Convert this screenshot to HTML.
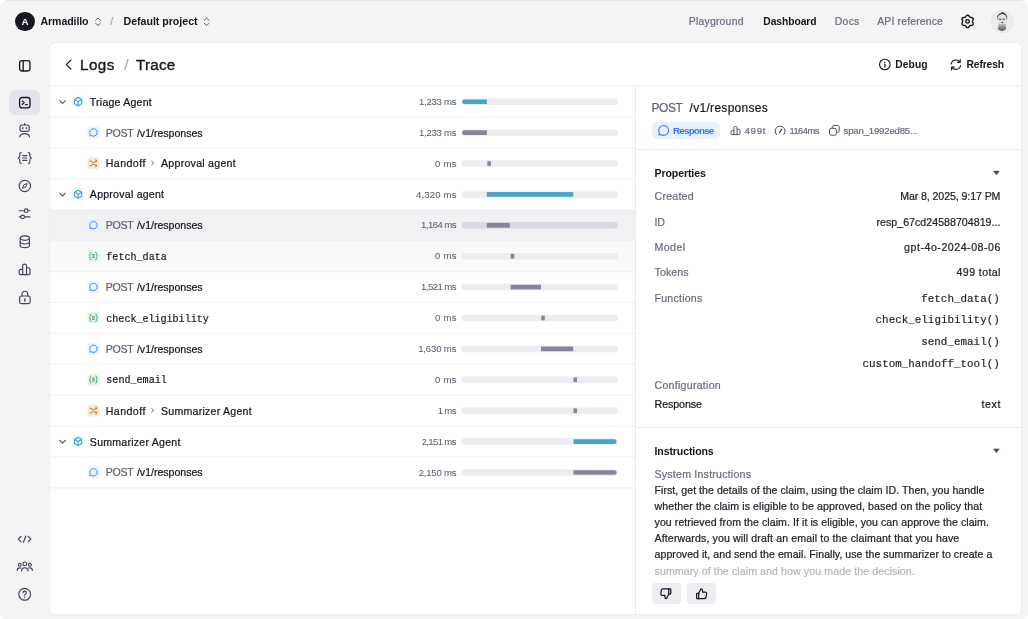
<!DOCTYPE html>
<html lang="en"><head><meta charset="utf-8"><title>Trace</title>
<style>
html,body{margin:0;padding:0;background:#fff;}
body{width:1028px;height:619px;overflow:hidden;position:relative;font-family:"Liberation Sans",sans-serif;}
#win{position:absolute;left:0;top:0;width:1028px;height:621px;background:#f4f4f4;border-radius:8px 8px 10px 10px;overflow:hidden;}
#topline{position:absolute;left:0;top:0;width:1028px;height:1px;background:#e6e6e6;}
.abs{position:absolute;display:block;}
.t{position:absolute;white-space:pre;display:block;}
#panel{position:absolute;left:49px;top:42px;width:971px;height:571px;background:#fff;border:1px solid #ebebf1;border-radius:6px;box-sizing:content-box;}
.sep{position:absolute;height:1px;background:#ededf2;}
.vsep{position:absolute;width:1px;background:#eaeaf0;}
.rowbg{position:absolute;left:50px;width:585px;}
.btn{position:absolute;background:#ececf1;border-radius:4px;}
#txt{position:absolute;left:0;top:0;width:1028px;height:619px;will-change:transform;}

</style></head><body>
<div id="win">
<div id="topline"></div>
<!-- org avatar -->
<div class="abs" style="left:15.3px;top:11.6px;width:19.8px;height:19.8px;border-radius:50%;background:#17171f;box-shadow:0 0 0 0.8px rgba(255,255,255,0.7)"></div>
<!-- up/down chevrons -->


<!-- gear -->

<!-- user avatar -->


<!-- sidebar -->
<div class="abs" style="left:9.3px;top:90.2px;width:30.7px;height:24.7px;border-radius:6px;background:#e3e3ea"></div>


<!-- robot -->

<!-- {=} -->

<!-- compass -->

<!-- sliders -->

<!-- db -->

<!-- chart -->

<!-- lock -->

<!-- code -->

<!-- people -->

<!-- help -->


<!-- main panel -->
<div id="panel"></div>
<!-- header chevron -->

<!-- info -->

<!-- refresh -->

<div class="vsep" style="left:635px;top:86px;height:528px"></div>

<!-- right panel -->
<div class="abs" style="left:651.8px;top:122.1px;width:68.2px;height:16.5px;border-radius:5px;background:#e8f2fe"></div>

<!-- bars -->

<!-- gauge -->

<!-- copy -->

<div class="sep" style="left:636px;top:149px;width:385px"></div>

<div class="sep" style="left:636px;top:427px;width:385px"></div>

<!-- thumbs -->
<div class="btn" style="left:651.6px;top:583.1px;width:29.2px;height:21px"></div>
<div class="btn" style="left:687px;top:583.1px;width:29px;height:21px"></div>










<div class="rowbg" style="top:209.62px;height:30.89px;background:#f1f1f4"></div>

<div class="rowbg" style="top:240.51px;height:30.89px;background:#fafafa"></div>










<div class="abs" style="left:50px;top:116px;width:585px;height:1px;background:rgba(240,240,245,0.36)"></div><div class="abs" style="left:50px;top:117px;width:585px;height:1px;background:rgba(240,240,245,0.64)"></div>
<div class="abs" style="left:50px;top:147px;width:585px;height:1px;background:rgba(240,240,245,0.47)"></div><div class="abs" style="left:50px;top:148px;width:585px;height:1px;background:rgba(240,240,245,0.53)"></div>
<div class="abs" style="left:50px;top:178px;width:585px;height:1px;background:rgba(240,240,245,0.57)"></div><div class="abs" style="left:50px;top:179px;width:585px;height:1px;background:rgba(240,240,245,0.43)"></div>
<div class="abs" style="left:50px;top:209px;width:585px;height:1px;background:rgba(240,240,245,0.68)"></div><div class="abs" style="left:50px;top:210px;width:585px;height:1px;background:rgba(240,240,245,0.32)"></div>
<div class="abs" style="left:50px;top:240px;width:585px;height:1px;background:rgba(240,240,245,0.78)"></div><div class="abs" style="left:50px;top:241px;width:585px;height:1px;background:rgba(240,240,245,0.22)"></div>
<div class="abs" style="left:50px;top:271px;width:585px;height:1px;background:rgba(240,240,245,0.89)"></div><div class="abs" style="left:50px;top:272px;width:585px;height:1px;background:rgba(240,240,245,0.11)"></div>
<div class="abs" style="left:50px;top:302px;width:585px;height:1px;background:rgba(240,240,245,1.00)"></div>
<div class="abs" style="left:50px;top:332px;width:585px;height:1px;background:rgba(240,240,245,0.10)"></div><div class="abs" style="left:50px;top:333px;width:585px;height:1px;background:rgba(240,240,245,0.90)"></div>
<div class="abs" style="left:50px;top:363px;width:585px;height:1px;background:rgba(240,240,245,0.21)"></div><div class="abs" style="left:50px;top:364px;width:585px;height:1px;background:rgba(240,240,245,0.79)"></div>
<div class="abs" style="left:50px;top:394px;width:585px;height:1px;background:rgba(240,240,245,0.31)"></div><div class="abs" style="left:50px;top:395px;width:585px;height:1px;background:rgba(240,240,245,0.69)"></div>
<div class="abs" style="left:50px;top:425px;width:585px;height:1px;background:rgba(240,240,245,0.42)"></div><div class="abs" style="left:50px;top:426px;width:585px;height:1px;background:rgba(240,240,245,0.58)"></div>
<div class="abs" style="left:50px;top:456px;width:585px;height:1px;background:rgba(240,240,245,0.52)"></div><div class="abs" style="left:50px;top:457px;width:585px;height:1px;background:rgba(240,240,245,0.48)"></div>
<div class="abs" style="left:50px;top:487px;width:585px;height:1px;background:rgba(240,240,245,0.62)"></div><div class="abs" style="left:50px;top:488px;width:585px;height:1px;background:rgba(240,240,245,0.38)"></div>
<div class="abs" style="left:50px;top:85px;width:971px;height:1px;background:rgba(240,240,245,0.46)"></div><div class="abs" style="left:50px;top:86px;width:971px;height:1px;background:rgba(240,240,245,0.54)"></div>

<svg class="abs" style="left:0;top:0" width="1028" height="619" viewBox="0 0 1028 619">
<g transform="translate(94 16.8)"><path d="M1.6 3.5 L4 1.3 L6.4 3.5 M1.6 6.5 L4 8.7 L6.4 6.5" fill="none" stroke="#55556a" stroke-width="0.95" stroke-linecap="round" stroke-linejoin="round"/></g>
<g transform="translate(202.6 16.8)"><path d="M1.6 3.5 L4 1.3 L6.4 3.5 M1.6 6.5 L4 8.7 L6.4 6.5" fill="none" stroke="#55556a" stroke-width="0.95" stroke-linecap="round" stroke-linejoin="round"/></g>
<g transform="translate(960.1 13.9)"><g fill="none" stroke="#121218" stroke-width="1.4" stroke-linejoin="round"><path d="M12.37 7.50 L12.41 7.18 L12.53 6.84 L12.69 6.47 L12.86 6.06 L13.00 5.63 L13.07 5.19 L13.04 4.77 L12.90 4.39 L12.64 4.07 L12.28 3.83 L11.87 3.67 L11.42 3.58 L10.99 3.52 L10.59 3.48 L10.23 3.41 L9.94 3.28 L9.68 3.09 L9.44 2.82 L9.20 2.49 L8.94 2.14 L8.63 1.80 L8.29 1.52 L7.90 1.33 L7.50 1.27 L7.10 1.33 L6.71 1.52 L6.37 1.80 L6.06 2.14 L5.80 2.49 L5.56 2.82 L5.32 3.09 L5.07 3.28 L4.77 3.41 L4.41 3.48 L4.01 3.52 L3.58 3.58 L3.13 3.67 L2.72 3.83 L2.36 4.07 L2.10 4.39 L1.96 4.77 L1.93 5.19 L2.00 5.63 L2.14 6.06 L2.31 6.47 L2.47 6.84 L2.59 7.18 L2.63 7.50 L2.59 7.82 L2.47 8.16 L2.31 8.53 L2.14 8.94 L2.00 9.37 L1.93 9.81 L1.96 10.23 L2.10 10.61 L2.36 10.93 L2.72 11.17 L3.13 11.33 L3.58 11.42 L4.01 11.48 L4.41 11.52 L4.77 11.59 L5.06 11.72 L5.32 11.91 L5.56 12.18 L5.80 12.51 L6.06 12.86 L6.37 13.20 L6.71 13.48 L7.10 13.67 L7.50 13.73 L7.90 13.67 L8.29 13.48 L8.63 13.20 L8.94 12.86 L9.20 12.51 L9.44 12.18 L9.68 11.91 L9.94 11.72 L10.23 11.59 L10.59 11.52 L10.99 11.48 L11.42 11.42 L11.87 11.33 L12.28 11.17 L12.64 10.93 L12.90 10.62 L13.04 10.23 L13.07 9.81 L13.00 9.37 L12.86 8.94 L12.69 8.53 L12.53 8.16 L12.41 7.82 Z"/><circle cx="7.5" cy="7.5" r="1.75"/></g></g>
<g transform="translate(990.6 10.4)"><defs><clipPath id="avc"><circle cx="11.5" cy="11.4" r="10.5"/></clipPath><filter id="avb" x="-20%" y="-20%" width="140%" height="140%"><feGaussianBlur stdDeviation="0.5"/></filter><linearGradient id="avg" x1="0" y1="0" x2="0" y2="1"><stop offset="0" stop-color="#c4c4c4"/><stop offset="0.55" stop-color="#8a8a8a"/><stop offset="1" stop-color="#5c5c5c"/></linearGradient></defs><circle cx="11.5" cy="11.4" r="10.8" fill="#ededee" stroke="#dfdfe1" stroke-width="0.7"/><g clip-path="url(#avc)" filter="url(#avb)"><path d="M7.3 5.6 C7.6 3.6 9.6 2.9 11.9 2.0 C13.6 2.6 15.6 3.6 16.0 6.0 L16.0 12.5 C15.6 14.5 14.2 15.6 11.7 15.6 C9.0 15.6 7.6 14.5 7.3 12.5 Z" fill="#e2e2e2"/><path d="M6.6 10.4 C6.2 7.6 6.5 5.4 7.6 4.3 C8.8 3.0 10.6 2.3 11.9 1.5 C13.2 2.2 15.2 3.0 16.0 4.6 C16.8 6.2 16.7 8.2 16.3 10.2 C16.1 8.0 15.8 6.2 15.1 5.2 C14.0 4.0 12.6 3.6 11.6 3.5 C10.0 3.8 8.6 4.4 7.8 5.6 C7.1 6.8 6.9 8.4 6.6 10.4 Z" fill="#3a3a3a"/><ellipse cx="9.5" cy="8.9" rx="1.15" ry="0.75" fill="#4a4a4a"/><ellipse cx="13.1" cy="8.9" rx="1.15" ry="0.75" fill="#4a4a4a"/><ellipse cx="11.6" cy="12.1" rx="0.9" ry="0.7" fill="#4a4a4a"/><path d="M8.3 12.8 C9.3 13.9 10.4 14.2 11.6 13.6 C12.8 14.2 13.9 13.9 14.9 12.8 C15.0 15.0 15.2 16.8 15.6 18.2 C14.8 19.8 13.4 20.5 11.4 20.5 C9.4 20.5 7.9 19.8 7.0 18.2 C7.7 16.8 8.1 15.0 8.3 12.8 Z" fill="url(#avg)"/></g></g>
<g transform="translate(17.3 58.3)"><g fill="none" stroke="#15151f" stroke-width="1.3" stroke-linejoin="round"><rect x="2.3" y="2.3" width="10.4" height="10.4" rx="2.4"/><path d="M5.9 2.3 V12.7"/></g></g>
<g transform="translate(17.3 95.2)"><g fill="none" stroke="#15151f" stroke-width="1.3" stroke-linejoin="round" stroke-linecap="round"><rect x="2.3" y="2.3" width="10.4" height="10.4" rx="2.4"/><path d="M5.0 5.7 L6.9 7.5 L5.0 9.3 M8.2 9.4 H10.0" stroke-width="1.15"/></g></g>
<g transform="translate(17.1 122.7)"><g fill="none" stroke="#42425a" stroke-width="1.15" stroke-linecap="round" stroke-linejoin="round"><rect x="2.9" y="2.3" width="9.2" height="6.4" rx="2.1"/><path d="M7.5 0.9 V2.3"/><path d="M2.6 14.2 C3.1 12.1 4.8 10.9 7.5 10.9 C10.2 10.9 11.9 12.1 12.4 14.2"/><path d="M5.7 5.0 V5.9 M9.3 5.0 V5.9" stroke-width="1.4"/></g></g>
<g transform="translate(16.8 150.5)"><g fill="none" stroke="#42425a" stroke-width="1.15" stroke-linecap="round" stroke-linejoin="round"><path d="M4.4 2.0 C2.6 2.0 3.0 3.7 3.0 5.2 C3.0 6.8 1.4 7.5 1.4 7.5 C1.4 7.5 3.0 8.2 3.0 9.8 C3.0 11.3 2.6 13.0 4.4 13.0"/><path d="M11.6 2.0 C13.4 2.0 13.0 3.7 13.0 5.2 C13.0 6.8 14.6 7.5 14.6 7.5 C14.6 7.5 13.0 8.2 13.0 9.8 C13.0 11.3 13.4 13.0 11.6 13.0"/><path d="M6.0 5.1 H10.0 M6.0 7.5 H10.0 M6.0 9.9 H10.0"/></g></g>
<g transform="translate(17.3 178.4)"><g fill="none" stroke="#42425a" stroke-width="1.15" stroke-linejoin="round"><circle cx="7.5" cy="7.5" r="5.7"/><path d="M9.9 5.1 L8.5 8.5 L5.1 9.9 L6.5 6.5 Z" stroke-width="1.0"/></g></g>
<g transform="translate(17.1 206.3)"><g fill="none" stroke="#42425a" stroke-width="1.15" stroke-linecap="round"><path d="M2.2 4.4 H7.2 M11.0 4.4 H12.9"/><circle cx="9.1" cy="4.4" r="1.8"/><path d="M2.2 10.6 H3.6 M7.4 10.6 H12.9"/><circle cx="5.5" cy="10.6" r="1.8"/></g></g>
<g transform="translate(17.3 234.2)"><g fill="none" stroke="#42425a" stroke-width="1.15" stroke-linecap="round" stroke-linejoin="round"><ellipse cx="7.5" cy="3.9" rx="4.6" ry="2.2"/><path d="M2.9 3.9 V11.2 C2.9 12.4 5.0 13.4 7.5 13.4 C10.0 13.4 12.1 12.4 12.1 11.2 V3.9"/><path d="M2.9 7.6 C2.9 8.8 5.0 9.8 7.5 9.8 C10.0 9.8 12.1 8.8 12.1 7.6"/></g></g>
<g transform="translate(17.1 261.9)"><g fill="none" stroke="#42425a" stroke-width="1.15" stroke-linejoin="round"><path d="M5.6 12.8 V3.6 C5.6 2.7 6.2 2.2 7.5 2.2 C8.8 2.2 9.4 2.7 9.4 3.6 V12.8"/><path d="M9.4 5.9 H11.2 C12.3 5.9 12.9 6.5 12.9 7.4 V11.4 C12.9 12.3 12.4 12.8 11.5 12.8 H3.5 C2.6 12.8 2.1 12.3 2.1 11.4 V9.0 C2.1 8.1 2.7 7.5 3.8 7.5 H5.6"/></g></g>
<g transform="translate(17.4 289.9)"><g fill="none" stroke="#42425a" stroke-width="1.15" stroke-linecap="round" stroke-linejoin="round"><rect x="2.2" y="6.1" width="10.6" height="7.6" rx="1.9"/><path d="M4.6 6.1 V4.4 C4.6 2.5 5.8 1.4 7.5 1.4 C9.2 1.4 10.4 2.5 10.4 4.4 V6.1"/><path d="M7.5 9.2 V11.0" stroke-width="1.5"/></g></g>
<g transform="translate(16.6 531.6)"><g fill="none" stroke="#42425a" stroke-width="1.2" stroke-linecap="round" stroke-linejoin="round"><path d="M4.3 4.9 L1.7 7.5 L4.3 10.1 M11.7 4.9 L14.3 7.5 L11.7 10.1 M9.2 4.4 L6.8 10.6"/></g></g>
<g transform="translate(15.8 559.2)"><g fill="none" stroke="#42425a" stroke-width="1.1" stroke-linecap="round" stroke-linejoin="round"><circle cx="9" cy="4.7" r="1.9"/><path d="M5.7 11.7 C5.9 9.7 7.1 8.6 9 8.6 C10.9 8.6 12.1 9.7 12.3 11.7"/><circle cx="3.9" cy="5.6" r="1.45"/><path d="M1.4 11.2 C1.5 9.6 2.4 8.7 3.9 8.7 C4.4 8.7 4.8 8.8 5.1 8.9"/><circle cx="14.1" cy="5.6" r="1.45"/><path d="M16.6 11.2 C16.5 9.6 15.6 8.7 14.1 8.7 C13.6 8.7 13.2 8.8 12.9 8.9"/></g></g>
<g transform="translate(17.2 586.8)"><g fill="none" stroke="#42425a" stroke-width="1.15" stroke-linecap="round" stroke-linejoin="round"><circle cx="7.5" cy="7.5" r="5.9"/><path d="M5.8 6.0 C5.8 5.0 6.5 4.4 7.5 4.4 C8.5 4.4 9.2 5.0 9.2 5.9 C9.2 7.0 7.5 7.2 7.5 8.4"/><path d="M7.5 10.4 V10.5" stroke-width="1.4"/></g></g>
<g transform="translate(63 58.6)"><path d="M7.9 1.5 L3.3 6 L7.9 10.5" fill="none" stroke="#15151f" stroke-width="1.25" stroke-linecap="round" stroke-linejoin="round"/></g>
<g transform="translate(877.85 57.5)"><g fill="none" stroke="#15151f" stroke-width="1.1" stroke-linecap="round"><circle cx="7" cy="7" r="5.3"/><path d="M7 6.7 V9.6" stroke-width="1.25"/><path d="M7 4.6 V4.7" stroke-width="1.45"/></g></g>
<g transform="translate(948.9 57.7)"><g fill="none" stroke="#15151f" stroke-width="1.15" stroke-linecap="round" stroke-linejoin="round"><path d="M2.3 6.2 C2.8 3.8 4.7 2.3 7.0 2.3 C8.7 2.3 10.0 3.0 11.0 4.4"/><path d="M11.3 1.9 V4.6 H8.6"/><path d="M11.7 7.8 C11.2 10.2 9.3 11.7 7.0 11.7 C5.3 11.7 4.0 11.0 3.0 9.6"/><path d="M2.7 12.1 V9.4 H5.4"/></g></g>
<g transform="translate(657.6 124.4)"><path d="M6.1 1.1 A4.9 4.9 0 1 1 3.3 10.05 L1.35 10.65 L1.95 8.7 A4.9 4.9 0 0 1 6.1 1.1 Z" fill="none" stroke="#3382f0" stroke-width="1.1" stroke-linejoin="round"/></g>
<g transform="translate(729.5 124.4)"><g fill="none" stroke="#4c4c62" stroke-width="1.0" stroke-linejoin="round"><path d="M4.4 10.2 V3.2 C4.4 2.5 4.9 2.1 6.0 2.1 C7.1 2.1 7.6 2.5 7.6 3.2 V10.2"/><path d="M7.6 4.9 H9.1 C10.0 4.9 10.5 5.4 10.5 6.1 V9.1 C10.5 9.8 10.1 10.2 9.4 10.2 H2.6 C1.9 10.2 1.5 9.8 1.5 9.1 V7.3 C1.5 6.6 2.0 6.1 2.9 6.1 H4.4"/></g></g>
<g transform="translate(774.1 124.6)"><g fill="none" stroke="#4c4c62" stroke-width="1.0" stroke-linecap="round" stroke-linejoin="round"><path d="M2.3 9.9 A5 5 0 1 1 9.7 9.9"/><path d="M5.5 7.9 L7.6 4.6" stroke-width="1.3"/></g></g>
<g transform="translate(828.3 124.3)"><g fill="none" stroke="#4c4c62" stroke-width="1.0" stroke-linejoin="round"><rect x="1.2" y="4.0" width="6.9" height="6.9" rx="1.7"/><path d="M4.0 4.0 V2.9 C4.0 1.8 4.6 1.2 5.7 1.2 H9.2 C10.3 1.2 10.9 1.8 10.9 2.9 V6.4 C10.9 7.5 10.3 8.1 9.2 8.1 H8.1"/></g></g>
<g transform="translate(992.4 169.9)"><path d="M1.1 1.2 H6.9 L4 5 Z" fill="#4a4a62" stroke="#4a4a62" stroke-width="0.5" stroke-linejoin="round"/></g>
<g transform="translate(992.4 447.7)"><path d="M1.1 1.2 H6.9 L4 5 Z" fill="#4a4a62" stroke="#4a4a62" stroke-width="0.5" stroke-linejoin="round"/></g>
<g transform="translate(659.3 587.2)"><g transform="rotate(180 6.5 6.5)" fill="none" stroke="#15151f" stroke-width="1.2" stroke-linejoin="round" stroke-linecap="round"><path d="M3.6 6.0 H2.3 C1.8 6.0 1.5 6.3 1.5 6.8 V10.6 C1.5 11.1 1.8 11.4 2.3 11.4 H3.6 Z"/><path d="M3.6 6.0 L5.8 1.6 C6.7 1.6 7.4 2.3 7.4 3.2 V4.9 H10.2 C11.0 4.9 11.6 5.6 11.5 6.4 L10.9 10.1 C10.8 10.9 10.2 11.4 9.5 11.4 H3.6"/></g></g>
<g transform="translate(695.1 587.3)"><g fill="none" stroke="#15151f" stroke-width="1.2" stroke-linejoin="round" stroke-linecap="round"><path d="M3.6 6.0 H2.3 C1.8 6.0 1.5 6.3 1.5 6.8 V10.6 C1.5 11.1 1.8 11.4 2.3 11.4 H3.6 Z"/><path d="M3.6 6.0 L5.8 1.6 C6.7 1.6 7.4 2.3 7.4 3.2 V4.9 H10.2 C11.0 4.9 11.6 5.6 11.5 6.4 L10.9 10.1 C10.8 10.9 10.2 11.4 9.5 11.4 H3.6"/></g></g>
<g transform="translate(58.6 97.59)"><path d="M1.1 2.95 L3.95 5.75 L6.8 2.95" fill="none" stroke="#4e4e64" stroke-width="1.05" stroke-linecap="round" stroke-linejoin="round"/></g>
<g transform="translate(72.1 95.59)"><rect width="12" height="12" rx="3.6" fill="#e9f6fb"/><path d="M6 1.9 L9.6 3.95 V8.05 L6 10.1 L2.4 8.05 V3.95 Z" fill="none" stroke="#3fa3c6" stroke-width="1.05" stroke-linejoin="round"/><path d="M2.6 4.1 L6 6 L9.4 4.1 M6 6 V9.9" fill="none" stroke="#3fa3c6" stroke-width="1.05" stroke-linejoin="round"/></g>
<g transform="translate(87.4 126.48)"><rect width="12" height="12" rx="3.6" fill="#ebf3fe"/><path d="M6.1 2.3 A3.7 3.7 0 1 1 4.0 9.05 L2.6 9.4 L2.95 8.0 A3.7 3.7 0 0 1 6.1 2.3 Z" fill="none" stroke="#4389f5" stroke-width="1.0" stroke-linejoin="round"/></g>
<g transform="translate(87.4 157.38)"><rect width="12" height="12" rx="3.6" fill="#fcead0"/><g fill="none" stroke="#bd7426" stroke-width="1.0" stroke-linecap="round" stroke-linejoin="round"><path d="M2.6 3.7 H3.6 C5.6 3.7 6.2 8.3 8.2 8.3 H9.3"/><path d="M2.6 8.3 H3.6 C4.3 8.3 4.8 7.7 5.2 7.0 M6.7 5.0 C7.1 4.3 7.6 3.7 8.2 3.7 H9.3"/><path d="M8.3 2.6 L9.5 3.7 L8.3 4.8 M8.3 7.2 L9.5 8.3 L8.3 9.4"/></g></g>
<g transform="translate(149.6 160.18)"><path d="M2.1 1.2 L4.0 3 L2.1 4.8" fill="none" stroke="#5e5e72" stroke-width="1.0" stroke-linecap="round" stroke-linejoin="round"/></g>
<g transform="translate(58.6 190.27)"><path d="M1.1 2.95 L3.95 5.75 L6.8 2.95" fill="none" stroke="#4e4e64" stroke-width="1.05" stroke-linecap="round" stroke-linejoin="round"/></g>
<g transform="translate(72.1 188.27)"><rect width="12" height="12" rx="3.6" fill="#e9f6fb"/><path d="M6 1.9 L9.6 3.95 V8.05 L6 10.1 L2.4 8.05 V3.95 Z" fill="none" stroke="#3fa3c6" stroke-width="1.05" stroke-linejoin="round"/><path d="M2.6 4.1 L6 6 L9.4 4.1 M6 6 V9.9" fill="none" stroke="#3fa3c6" stroke-width="1.05" stroke-linejoin="round"/></g>
<g transform="translate(87.4 219.17)"><rect width="12" height="12" rx="3.6" fill="#e6effd"/><path d="M6.1 2.3 A3.7 3.7 0 1 1 4.0 9.05 L2.6 9.4 L2.95 8.0 A3.7 3.7 0 0 1 6.1 2.3 Z" fill="none" stroke="#4389f5" stroke-width="1.0" stroke-linejoin="round"/></g>
<g transform="translate(87.4 250.06)"><rect width="12" height="12" rx="3.6" fill="#e6f7ea"/><g transform="translate(6 6) scale(1.16) translate(-6 -6)" fill="none" stroke="#3f9d6c" stroke-width="0.8" stroke-linecap="round" stroke-linejoin="round"><path d="M4.0 2.9 C3.0 2.9 3.3 3.9 3.3 4.8 C3.3 5.6 2.5 6 2.5 6 C2.5 6 3.3 6.4 3.3 7.2 C3.3 8.1 3.0 9.1 4.0 9.1"/><path d="M8.0 2.9 C9.0 2.9 8.7 3.9 8.7 4.8 C8.7 5.6 9.5 6 9.5 6 C9.5 6 8.7 6.4 8.7 7.2 C8.7 8.1 9.0 9.1 8.0 9.1"/><path d="M5.2 4.7 H6.8 M5.2 6 H6.8 M5.2 7.3 H6.8"/></g></g>
<g transform="translate(87.4 280.96)"><rect width="12" height="12" rx="3.6" fill="#ebf3fe"/><path d="M6.1 2.3 A3.7 3.7 0 1 1 4.0 9.05 L2.6 9.4 L2.95 8.0 A3.7 3.7 0 0 1 6.1 2.3 Z" fill="none" stroke="#4389f5" stroke-width="1.0" stroke-linejoin="round"/></g>
<g transform="translate(87.4 311.85)"><rect width="12" height="12" rx="3.6" fill="#e6f7ea"/><g transform="translate(6 6) scale(1.16) translate(-6 -6)" fill="none" stroke="#3f9d6c" stroke-width="0.8" stroke-linecap="round" stroke-linejoin="round"><path d="M4.0 2.9 C3.0 2.9 3.3 3.9 3.3 4.8 C3.3 5.6 2.5 6 2.5 6 C2.5 6 3.3 6.4 3.3 7.2 C3.3 8.1 3.0 9.1 4.0 9.1"/><path d="M8.0 2.9 C9.0 2.9 8.7 3.9 8.7 4.8 C8.7 5.6 9.5 6 9.5 6 C9.5 6 8.7 6.4 8.7 7.2 C8.7 8.1 9.0 9.1 8.0 9.1"/><path d="M5.2 4.7 H6.8 M5.2 6 H6.8 M5.2 7.3 H6.8"/></g></g>
<g transform="translate(87.4 342.75)"><rect width="12" height="12" rx="3.6" fill="#ebf3fe"/><path d="M6.1 2.3 A3.7 3.7 0 1 1 4.0 9.05 L2.6 9.4 L2.95 8.0 A3.7 3.7 0 0 1 6.1 2.3 Z" fill="none" stroke="#4389f5" stroke-width="1.0" stroke-linejoin="round"/></g>
<g transform="translate(87.4 373.64)"><rect width="12" height="12" rx="3.6" fill="#e6f7ea"/><g transform="translate(6 6) scale(1.16) translate(-6 -6)" fill="none" stroke="#3f9d6c" stroke-width="0.8" stroke-linecap="round" stroke-linejoin="round"><path d="M4.0 2.9 C3.0 2.9 3.3 3.9 3.3 4.8 C3.3 5.6 2.5 6 2.5 6 C2.5 6 3.3 6.4 3.3 7.2 C3.3 8.1 3.0 9.1 4.0 9.1"/><path d="M8.0 2.9 C9.0 2.9 8.7 3.9 8.7 4.8 C8.7 5.6 9.5 6 9.5 6 C9.5 6 8.7 6.4 8.7 7.2 C8.7 8.1 9.0 9.1 8.0 9.1"/><path d="M5.2 4.7 H6.8 M5.2 6 H6.8 M5.2 7.3 H6.8"/></g></g>
<g transform="translate(87.4 404.54)"><rect width="12" height="12" rx="3.6" fill="#fcead0"/><g fill="none" stroke="#bd7426" stroke-width="1.0" stroke-linecap="round" stroke-linejoin="round"><path d="M2.6 3.7 H3.6 C5.6 3.7 6.2 8.3 8.2 8.3 H9.3"/><path d="M2.6 8.3 H3.6 C4.3 8.3 4.8 7.7 5.2 7.0 M6.7 5.0 C7.1 4.3 7.6 3.7 8.2 3.7 H9.3"/><path d="M8.3 2.6 L9.5 3.7 L8.3 4.8 M8.3 7.2 L9.5 8.3 L8.3 9.4"/></g></g>
<g transform="translate(149.6 407.34)"><path d="M2.1 1.2 L4.0 3 L2.1 4.8" fill="none" stroke="#5e5e72" stroke-width="1.0" stroke-linecap="round" stroke-linejoin="round"/></g>
<g transform="translate(58.6 437.43)"><path d="M1.1 2.95 L3.95 5.75 L6.8 2.95" fill="none" stroke="#4e4e64" stroke-width="1.05" stroke-linecap="round" stroke-linejoin="round"/></g>
<g transform="translate(72.1 435.43)"><rect width="12" height="12" rx="3.6" fill="#e9f6fb"/><path d="M6 1.9 L9.6 3.95 V8.05 L6 10.1 L2.4 8.05 V3.95 Z" fill="none" stroke="#3fa3c6" stroke-width="1.05" stroke-linejoin="round"/><path d="M2.6 4.1 L6 6 L9.4 4.1 M6 6 V9.9" fill="none" stroke="#3fa3c6" stroke-width="1.05" stroke-linejoin="round"/></g>
<g transform="translate(87.4 466.33)"><rect width="12" height="12" rx="3.6" fill="#ebf3fe"/><path d="M6.1 2.3 A3.7 3.7 0 1 1 4.0 9.05 L2.6 9.4 L2.95 8.0 A3.7 3.7 0 0 1 6.1 2.3 Z" fill="none" stroke="#4389f5" stroke-width="1.0" stroke-linejoin="round"/></g>
<g transform="translate(0 0)"><rect x="461.5" y="98.49" width="156.4" height="6.5" rx="3.25" fill="#ececf1"/><path d="M464.45 99.39 H486.90 V104.09 H464.45 A2.35 2.35 0 0 1 464.45 99.39 Z" fill="#46a6c6"/><rect x="461.5" y="129.38" width="156.4" height="6.5" rx="3.25" fill="#ececf1"/><path d="M464.45 130.28 H486.90 V134.98 H464.45 A2.35 2.35 0 0 1 464.45 130.28 Z" fill="#86869a"/><rect x="461.5" y="160.28" width="156.4" height="6.5" rx="3.25" fill="#ececf1"/><rect x="487.40" y="161.18" width="3.50" height="4.7" fill="#86869a"/><rect x="461.5" y="191.17" width="156.4" height="6.5" rx="3.25" fill="#ececf1"/><rect x="486.90" y="192.07" width="86.30" height="4.7" fill="#46a6c6"/><rect x="461.5" y="222.07" width="156.4" height="6.5" rx="3.25" fill="#d9d9e1"/><rect x="486.90" y="222.97" width="22.90" height="4.7" fill="#86869a"/><rect x="461.5" y="252.96" width="156.4" height="6.5" rx="3.25" fill="#ececf1"/><rect x="510.70" y="253.86" width="3.60" height="4.7" fill="#86869a"/><rect x="461.5" y="283.86" width="156.4" height="6.5" rx="3.25" fill="#ececf1"/><rect x="510.70" y="284.76" width="30.30" height="4.7" fill="#86869a"/><rect x="461.5" y="314.75" width="156.4" height="6.5" rx="3.25" fill="#ececf1"/><rect x="541.30" y="315.65" width="3.50" height="4.7" fill="#86869a"/><rect x="461.5" y="345.65" width="156.4" height="6.5" rx="3.25" fill="#ececf1"/><rect x="541.00" y="346.55" width="32.20" height="4.7" fill="#86869a"/><rect x="461.5" y="376.54" width="156.4" height="6.5" rx="3.25" fill="#ececf1"/><rect x="573.50" y="377.44" width="3.50" height="4.7" fill="#86869a"/><rect x="461.5" y="407.44" width="156.4" height="6.5" rx="3.25" fill="#ececf1"/><rect x="573.50" y="408.34" width="3.50" height="4.7" fill="#86869a"/><rect x="461.5" y="438.33" width="156.4" height="6.5" rx="3.25" fill="#ececf1"/><path d="M573.50 439.23 H614.25 A2.35 2.35 0 0 1 614.25 443.93 H573.50 Z" fill="#46a6c6"/><rect x="461.5" y="469.23" width="156.4" height="6.5" rx="3.25" fill="#ececf1"/><path d="M573.50 470.13 H614.25 A2.35 2.35 0 0 1 614.25 474.83 H573.50 Z" fill="#86869a"/></g>
</svg>
<div id="txt">
<span class="t" id="t0" style="left:21.38px;top:17.00px;font:700 9.8px/1 'Liberation Sans', sans-serif;color:#ffffff;letter-spacing:0.000px;">A</span>
<span class="t" id="t1" style="left:40.55px;top:16.00px;font:700 10.6px/1 'Liberation Sans', sans-serif;color:#15151f;letter-spacing:-0.107px;">Armadillo</span>
<span class="t" id="t2" style="left:110.15px;top:16.00px;font:400 10.6px/1 'Liberation Sans', sans-serif;color:#a9a9b8;letter-spacing:0.000px;-webkit-text-stroke:0.22px #a9a9b8;">/</span>
<span class="t" id="t3" style="left:123.55px;top:16.00px;font:700 10.6px/1 'Liberation Sans', sans-serif;color:#15151f;letter-spacing:-0.012px;">Default project</span>
<span class="t" id="t4" style="left:688.76px;top:17.00px;font:400 10.4px/1 'Liberation Sans', sans-serif;color:#6b6b7e;letter-spacing:0.234px;-webkit-text-stroke:0.22px #6b6b7e;">Playground</span>
<span class="t" id="t5" style="left:763.26px;top:17.00px;font:700 10.3px/1 'Liberation Sans', sans-serif;color:#15151f;letter-spacing:-0.053px;">Dashboard</span>
<span class="t" id="t6" style="left:834.76px;top:17.00px;font:400 10.4px/1 'Liberation Sans', sans-serif;color:#6b6b7e;letter-spacing:0.299px;-webkit-text-stroke:0.22px #6b6b7e;">Docs</span>
<span class="t" id="t7" style="left:877.26px;top:17.00px;font:400 10.4px/1 'Liberation Sans', sans-serif;color:#6b6b7e;letter-spacing:0.171px;-webkit-text-stroke:0.22px #6b6b7e;">API reference</span>
<span class="t" id="t8" style="left:79.95px;top:57.00px;font:400 15.2px/1 'Liberation Sans', sans-serif;color:#15151f;letter-spacing:0.518px;-webkit-text-stroke:0.35px #15151f;">Logs</span>
<span class="t" id="t9" style="left:124.35px;top:57.00px;font:400 15.2px/1 'Liberation Sans', sans-serif;color:#a9a9b8;letter-spacing:0.000px;-webkit-text-stroke:0.22px #a9a9b8;">/</span>
<span class="t" id="t10" style="left:136.05px;top:57.00px;font:400 15.2px/1 'Liberation Sans', sans-serif;color:#15151f;letter-spacing:0.232px;-webkit-text-stroke:0.35px #15151f;">Trace</span>
<span class="t" id="t11" style="left:895.16px;top:60.00px;font:700 10.3px/1 'Liberation Sans', sans-serif;color:#15151f;letter-spacing:0.107px;">Debug</span>
<span class="t" id="t12" style="left:966.46px;top:60.00px;font:700 10.3px/1 'Liberation Sans', sans-serif;color:#15151f;letter-spacing:-0.111px;">Refresh</span>
<span class="t" id="t13" style="left:89.85px;top:97.00px;font:400 10.6px/1 'Liberation Sans', sans-serif;color:#15151f;letter-spacing:0.201px;-webkit-text-stroke:0.22px #15151f;">Triage Agent</span>
<span class="t" id="t14" style="left:418.99px;top:97.00px;font:400 9.6px/1 'Liberation Sans', sans-serif;color:#5c5c70;letter-spacing:-0.279px;-webkit-text-stroke:0.05px #5c5c70;">1,233 ms</span>
<span class="t" id="t15" style="left:105.75px;top:128.00px;font:400 10.6px/1 'Liberation Sans', sans-serif;color:#5f5f72;letter-spacing:-0.314px;-webkit-text-stroke:0.22px #5f5f72;">POST</span>
<span class="t" id="t16" style="left:136.95px;top:128.00px;font:400 10.6px/1 'Liberation Sans', sans-serif;color:#15151f;letter-spacing:-0.021px;-webkit-text-stroke:0.22px #15151f;">/v1/responses</span>
<span class="t" id="t17" style="left:418.99px;top:128.00px;font:400 9.6px/1 'Liberation Sans', sans-serif;color:#5c5c70;letter-spacing:-0.279px;-webkit-text-stroke:0.05px #5c5c70;">1,233 ms</span>
<span class="t" id="t18" style="left:105.75px;top:158.00px;font:400 10.6px/1 'Liberation Sans', sans-serif;color:#15151f;letter-spacing:0.447px;-webkit-text-stroke:0.22px #15151f;">Handoff</span>
<span class="t" id="t19" style="left:161.05px;top:158.00px;font:400 10.6px/1 'Liberation Sans', sans-serif;color:#15151f;letter-spacing:0.257px;-webkit-text-stroke:0.22px #15151f;">Approval agent</span>
<span class="t" id="t20" style="left:434.89px;top:159.00px;font:400 9.6px/1 'Liberation Sans', sans-serif;color:#5c5c70;letter-spacing:0.273px;-webkit-text-stroke:0.05px #5c5c70;">0 ms</span>
<span class="t" id="t21" style="left:89.85px;top:189.00px;font:400 10.6px/1 'Liberation Sans', sans-serif;color:#15151f;letter-spacing:0.226px;-webkit-text-stroke:0.22px #15151f;">Approval agent</span>
<span class="t" id="t22" style="left:416.09px;top:190.00px;font:400 9.6px/1 'Liberation Sans', sans-serif;color:#5c5c70;letter-spacing:0.135px;-webkit-text-stroke:0.05px #5c5c70;">4,320 ms</span>
<span class="t" id="t23" style="left:105.75px;top:220.00px;font:400 10.6px/1 'Liberation Sans', sans-serif;color:#5f5f72;letter-spacing:-0.314px;-webkit-text-stroke:0.22px #5f5f72;">POST</span>
<span class="t" id="t24" style="left:136.95px;top:220.00px;font:400 10.6px/1 'Liberation Sans', sans-serif;color:#15151f;letter-spacing:-0.021px;-webkit-text-stroke:0.22px #15151f;">/v1/responses</span>
<span class="t" id="t25" style="left:421.09px;top:220.00px;font:400 9.6px/1 'Liberation Sans', sans-serif;color:#5c5c70;letter-spacing:-0.579px;-webkit-text-stroke:0.05px #5c5c70;">1,164 ms</span>
<span class="t" id="t26" style="left:106.30px;top:253.00px;font:400 10.1px/1 'Liberation Mono', monospace;color:#15151f;letter-spacing:-0.008px;-webkit-text-stroke:0.18px #15151f;">fetch_data</span>
<span class="t" id="t27" style="left:434.89px;top:251.00px;font:400 9.6px/1 'Liberation Sans', sans-serif;color:#5c5c70;letter-spacing:0.273px;-webkit-text-stroke:0.05px #5c5c70;">0 ms</span>
<span class="t" id="t28" style="left:105.75px;top:282.00px;font:400 10.6px/1 'Liberation Sans', sans-serif;color:#5f5f72;letter-spacing:-0.314px;-webkit-text-stroke:0.22px #5f5f72;">POST</span>
<span class="t" id="t29" style="left:136.95px;top:282.00px;font:400 10.6px/1 'Liberation Sans', sans-serif;color:#15151f;letter-spacing:-0.021px;-webkit-text-stroke:0.22px #15151f;">/v1/responses</span>
<span class="t" id="t30" style="left:421.09px;top:282.00px;font:400 9.6px/1 'Liberation Sans', sans-serif;color:#5c5c70;letter-spacing:-0.579px;-webkit-text-stroke:0.05px #5c5c70;">1,521 ms</span>
<span class="t" id="t31" style="left:106.30px;top:315.00px;font:400 10.1px/1 'Liberation Mono', monospace;color:#15151f;letter-spacing:-0.030px;-webkit-text-stroke:0.18px #15151f;">check_eligibility</span>
<span class="t" id="t32" style="left:434.89px;top:313.00px;font:400 9.6px/1 'Liberation Sans', sans-serif;color:#5c5c70;letter-spacing:0.273px;-webkit-text-stroke:0.05px #5c5c70;">0 ms</span>
<span class="t" id="t33" style="left:105.75px;top:344.00px;font:400 10.6px/1 'Liberation Sans', sans-serif;color:#5f5f72;letter-spacing:-0.314px;-webkit-text-stroke:0.22px #5f5f72;">POST</span>
<span class="t" id="t34" style="left:136.95px;top:344.00px;font:400 10.6px/1 'Liberation Sans', sans-serif;color:#15151f;letter-spacing:-0.021px;-webkit-text-stroke:0.22px #15151f;">/v1/responses</span>
<span class="t" id="t35" style="left:418.19px;top:344.00px;font:400 9.6px/1 'Liberation Sans', sans-serif;color:#5c5c70;letter-spacing:-0.165px;-webkit-text-stroke:0.05px #5c5c70;">1,630 ms</span>
<span class="t" id="t36" style="left:106.30px;top:376.00px;font:400 10.1px/1 'Liberation Mono', monospace;color:#15151f;letter-spacing:-0.008px;-webkit-text-stroke:0.18px #15151f;">send_email</span>
<span class="t" id="t37" style="left:434.89px;top:375.00px;font:400 9.6px/1 'Liberation Sans', sans-serif;color:#5c5c70;letter-spacing:0.273px;-webkit-text-stroke:0.05px #5c5c70;">0 ms</span>
<span class="t" id="t38" style="left:105.75px;top:406.00px;font:400 10.6px/1 'Liberation Sans', sans-serif;color:#15151f;letter-spacing:0.447px;-webkit-text-stroke:0.22px #15151f;">Handoff</span>
<span class="t" id="t39" style="left:161.05px;top:406.00px;font:400 10.6px/1 'Liberation Sans', sans-serif;color:#15151f;letter-spacing:0.231px;-webkit-text-stroke:0.22px #15151f;">Summarizer Agent</span>
<span class="t" id="t40" style="left:437.69px;top:406.00px;font:400 9.6px/1 'Liberation Sans', sans-serif;color:#5c5c70;letter-spacing:-0.660px;-webkit-text-stroke:0.05px #5c5c70;">1 ms</span>
<span class="t" id="t41" style="left:89.85px;top:437.00px;font:400 10.6px/1 'Liberation Sans', sans-serif;color:#15151f;letter-spacing:0.224px;-webkit-text-stroke:0.22px #15151f;">Summarizer Agent</span>
<span class="t" id="t42" style="left:421.69px;top:437.00px;font:400 9.6px/1 'Liberation Sans', sans-serif;color:#5c5c70;letter-spacing:-0.665px;-webkit-text-stroke:0.05px #5c5c70;">2,151 ms</span>
<span class="t" id="t43" style="left:105.75px;top:467.00px;font:400 10.6px/1 'Liberation Sans', sans-serif;color:#5f5f72;letter-spacing:-0.314px;-webkit-text-stroke:0.22px #5f5f72;">POST</span>
<span class="t" id="t44" style="left:136.95px;top:467.00px;font:400 10.6px/1 'Liberation Sans', sans-serif;color:#15151f;letter-spacing:-0.021px;-webkit-text-stroke:0.22px #15151f;">/v1/responses</span>
<span class="t" id="t45" style="left:418.79px;top:468.00px;font:400 9.6px/1 'Liberation Sans', sans-serif;color:#5c5c70;letter-spacing:-0.250px;-webkit-text-stroke:0.05px #5c5c70;">2,150 ms</span>
<span class="t" id="t46" style="left:651.59px;top:102.00px;font:400 12.0px/1 'Liberation Sans', sans-serif;color:#5f5f72;letter-spacing:-0.484px;-webkit-text-stroke:0.2px #5f5f72;">POST</span>
<span class="t" id="t47" style="left:689.59px;top:102.00px;font:400 12.0px/1 'Liberation Sans', sans-serif;color:#15151f;letter-spacing:0.292px;-webkit-text-stroke:0.18px #15151f;">/v1/responses</span>
<span class="t" id="t48" style="left:673.08px;top:126.00px;font:700 9.9px/1 'Liberation Sans', sans-serif;color:#2c7cf0;letter-spacing:-0.852px;">Response</span>
<span class="t" id="t49" style="left:744.58px;top:126.00px;font:400 9.8px/1 'Liberation Sans', sans-serif;color:#6b6b7e;letter-spacing:0.585px;-webkit-text-stroke:0.22px #6b6b7e;">499t</span>
<span class="t" id="t50" style="left:789.40px;top:126.00px;font:400 9.4px/1 'Liberation Sans', sans-serif;color:#6b6b7e;letter-spacing:-0.531px;-webkit-text-stroke:0.22px #6b6b7e;">1164ms</span>
<span class="t" id="t51" style="left:843.59px;top:126.00px;font:400 9.6px/1 'Liberation Sans', sans-serif;color:#6b6b7e;letter-spacing:-0.187px;-webkit-text-stroke:0.22px #6b6b7e;">span_1992ed85...</span>
<span class="t" id="t52" style="left:654.55px;top:168.00px;font:700 10.6px/1 'Liberation Sans', sans-serif;color:#15151f;letter-spacing:-0.123px;">Properties</span>
<span class="t" id="t53" style="left:654.55px;top:191.00px;font:400 10.6px/1 'Liberation Sans', sans-serif;color:#6b6b7e;letter-spacing:0.233px;-webkit-text-stroke:0.22px #6b6b7e;">Created</span>
<span class="t" id="t54" style="left:900.15px;top:191.00px;font:400 10.6px/1 'Liberation Sans', sans-serif;color:#22222e;letter-spacing:-0.083px;-webkit-text-stroke:0.22px #22222e;">Mar 8, 2025, 9:17 PM</span>
<span class="t" id="t55" style="left:654.55px;top:217.00px;font:400 10.6px/1 'Liberation Sans', sans-serif;color:#6b6b7e;letter-spacing:-0.293px;-webkit-text-stroke:0.22px #6b6b7e;">ID</span>
<span class="t" id="t56" style="left:876.45px;top:217.00px;font:400 10.6px/1 'Liberation Sans', sans-serif;color:#22222e;letter-spacing:0.040px;-webkit-text-stroke:0.22px #22222e;">resp_67cd24588704819...</span>
<span class="t" id="t57" style="left:654.55px;top:242.00px;font:400 10.6px/1 'Liberation Sans', sans-serif;color:#6b6b7e;letter-spacing:0.410px;-webkit-text-stroke:0.22px #6b6b7e;">Model</span>
<span class="t" id="t58" style="left:904.05px;top:242.00px;font:400 10.6px/1 'Liberation Sans', sans-serif;color:#22222e;letter-spacing:0.540px;-webkit-text-stroke:0.22px #22222e;">gpt-4o-2024-08-06</span>
<span class="t" id="t59" style="left:654.55px;top:267.00px;font:400 10.6px/1 'Liberation Sans', sans-serif;color:#6b6b7e;letter-spacing:0.105px;-webkit-text-stroke:0.22px #6b6b7e;">Tokens</span>
<span class="t" id="t60" style="left:956.55px;top:267.00px;font:400 10.6px/1 'Liberation Sans', sans-serif;color:#22222e;letter-spacing:0.406px;-webkit-text-stroke:0.22px #22222e;">499 total</span>
<span class="t" id="t61" style="left:654.55px;top:293.00px;font:400 10.6px/1 'Liberation Sans', sans-serif;color:#6b6b7e;letter-spacing:0.220px;-webkit-text-stroke:0.22px #6b6b7e;">Functions</span>
<span class="t" id="t62" style="left:921.22px;top:294.00px;font:400 10.87px/1 'Liberation Mono', monospace;color:#22222e;letter-spacing:0.029px;-webkit-text-stroke:0.18px #22222e;">fetch_data()</span>
<span class="t" id="t63" style="left:875.58px;top:315.00px;font:400 10.87px/1 'Liberation Mono', monospace;color:#22222e;letter-spacing:0.019px;-webkit-text-stroke:0.18px #22222e;">check_eligibility()</span>
<span class="t" id="t64" style="left:921.22px;top:337.00px;font:400 10.87px/1 'Liberation Mono', monospace;color:#22222e;letter-spacing:0.029px;-webkit-text-stroke:0.18px #22222e;">send_email()</span>
<span class="t" id="t65" style="left:862.54px;top:359.00px;font:400 10.87px/1 'Liberation Mono', monospace;color:#22222e;letter-spacing:0.017px;-webkit-text-stroke:0.18px #22222e;">custom_handoff_tool()</span>
<span class="t" id="t66" style="left:654.55px;top:380.00px;font:400 10.6px/1 'Liberation Sans', sans-serif;color:#6b6b7e;letter-spacing:0.265px;-webkit-text-stroke:0.22px #6b6b7e;">Configuration</span>
<span class="t" id="t67" style="left:654.55px;top:399.00px;font:400 10.6px/1 'Liberation Sans', sans-serif;color:#15151f;letter-spacing:-0.057px;-webkit-text-stroke:0.22px #15151f;">Response</span>
<span class="t" id="t68" style="left:981.45px;top:399.00px;font:400 10.6px/1 'Liberation Sans', sans-serif;color:#15151f;letter-spacing:0.641px;-webkit-text-stroke:0.22px #15151f;">text</span>
<span class="t" id="t69" style="left:654.55px;top:446.00px;font:700 10.6px/1 'Liberation Sans', sans-serif;color:#15151f;letter-spacing:-0.129px;">Instructions</span>
<span class="t" id="t70" style="left:654.55px;top:469.00px;font:400 10.6px/1 'Liberation Sans', sans-serif;color:#6b6b7e;letter-spacing:0.220px;-webkit-text-stroke:0.22px #6b6b7e;">System Instructions</span>
<span class="t" id="t71" style="left:654.55px;top:485.00px;font:400 10.6px/1 'Liberation Sans', sans-serif;color:#1d1d28;letter-spacing:0.037px;-webkit-text-stroke:0.22px #1d1d28;">First, get the details of the claim, using the claim ID. Then, you handle</span>
<span class="t" id="t72" style="left:654.55px;top:501.00px;font:400 10.6px/1 'Liberation Sans', sans-serif;color:#1d1d28;letter-spacing:0.096px;-webkit-text-stroke:0.22px #1d1d28;">whether the claim is eligible to be approved, based on the policy that</span>
<span class="t" id="t73" style="left:654.55px;top:517.00px;font:400 10.6px/1 'Liberation Sans', sans-serif;color:#1d1d28;letter-spacing:0.062px;-webkit-text-stroke:0.22px #1d1d28;">you retrieved from the claim. If it is eligible, you can approve the claim.</span>
<span class="t" id="t74" style="left:654.55px;top:533.00px;font:400 10.6px/1 'Liberation Sans', sans-serif;color:#1d1d28;letter-spacing:0.124px;-webkit-text-stroke:0.22px #1d1d28;">Afterwards, you will draft an email to the claimant that you have</span>
<span class="t" id="t75" style="left:654.55px;top:549.00px;font:400 10.6px/1 'Liberation Sans', sans-serif;color:#1d1d28;letter-spacing:0.033px;-webkit-text-stroke:0.22px #1d1d28;">approved it, and send the email. Finally, use the summarizer to create a</span>
<span class="t" id="t76" style="left:654.55px;top:566.00px;font:400 10.6px/1 'Liberation Sans', sans-serif;color:#b4b4bc;letter-spacing:0.093px;-webkit-text-stroke:0.22px #b4b4bc;">summary of the claim and how you made the decision.</span>
</div>
</div>
</body></html>
